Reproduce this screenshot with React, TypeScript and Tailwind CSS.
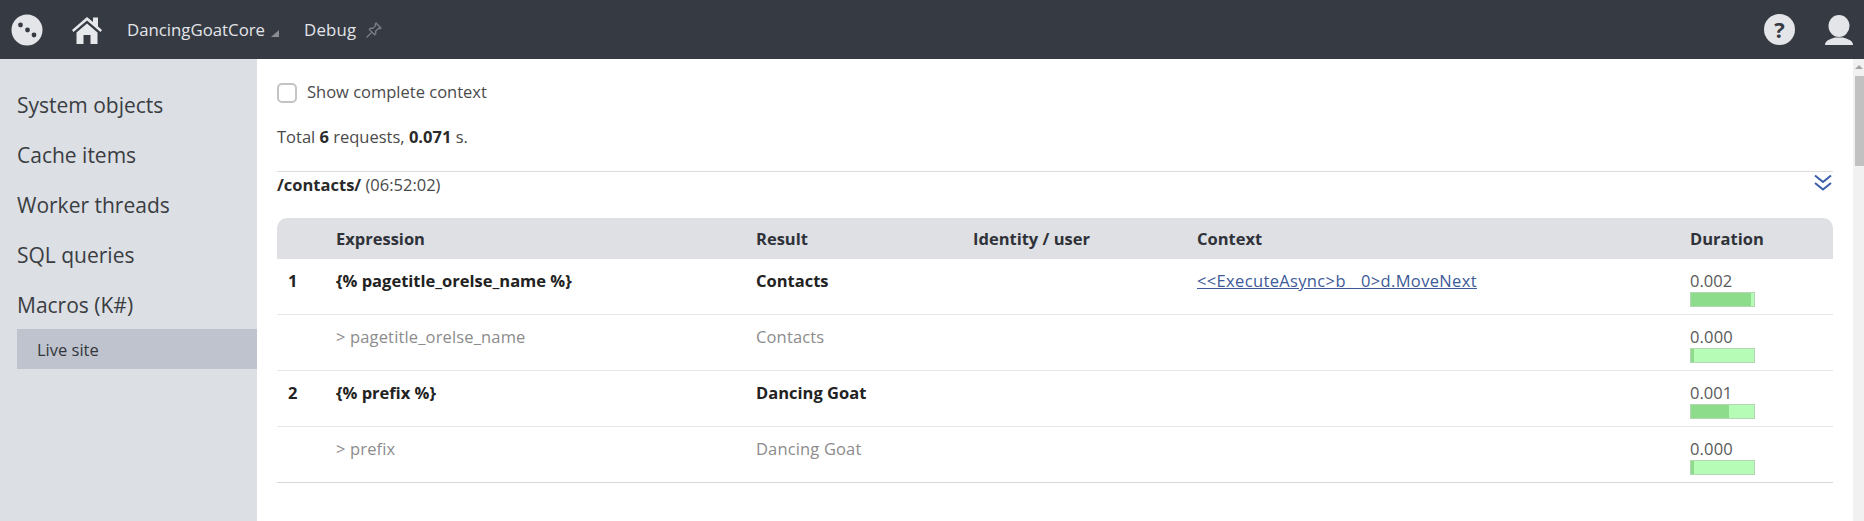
import React from 'react';

const GRID = 'grid grid-cols-[59px_420px_217px_224px_493px_143px]';

const rows = [
  { no: '1', expression: '{% pagetitle_orelse_name %}', result: 'Contacts', context: '<<ExecuteAsync>b__0>d.MoveNext', duration: '0.002', fill: 'w-[95%]', main: true },
  { no: '', expression: '> pagetitle_orelse_name', result: 'Contacts', context: '', duration: '0.000', fill: 'w-[5%]', main: false },
  { no: '2', expression: '{% prefix %}', result: 'Dancing Goat', context: '', duration: '0.001', fill: 'w-[60%]', main: true },
  { no: '', expression: '> prefix', result: 'Dancing Goat', context: '', duration: '0.000', fill: 'w-[5%]', main: false },
];

const menu = ['System objects', 'Cache items', 'Worker threads', 'SQL queries', 'Macros (K#)'];

const Logo = () => (
  <svg width="32" height="32" viewBox="0 0 32 32">
    <circle cx="16" cy="16" r="15.5" fill="#e3e5e9" />
    <circle cx="9.5" cy="11" r="2.4" fill="#363a43" />
    <circle cx="16.5" cy="16" r="2.4" fill="#363a43" />
    <circle cx="23" cy="21" r="2.4" fill="#363a43" />
  </svg>
);

const Home = () => (
  <svg width="32" height="30" viewBox="0 0 32 30">
    <path d="M1 15 L16 2 L22 7 V2.5 H27 V11.5 L31 15 L29.5 17 L16 5.5 L2.5 17 Z" fill="#e6e8ec" />
    <path d="M5.5 17.5 L16 8.5 L26.5 17.5 V29 H19.5 V20 H12.5 V29 H5.5 Z" fill="#e6e8ec" />
  </svg>
);

const Pin = () => (
  <svg width="16" height="16" viewBox="0 0 16 16">
    <path d="M10 1 L15 6 L13.8 6.8 L12.6 6.2 L9.6 9.2 L9.8 11.6 L8.6 12.8 L3.2 7.4 L4.4 6.2 L6.8 6.4 L9.8 3.4 L9.2 2.2 Z M5.4 10.6 L1 15 L1 15 L5.4 10.6" fill="none" stroke="#7d8087" strokeWidth="1.3" strokeLinejoin="round" />
  </svg>
);

const User = () => (
  <svg width="30" height="30" viewBox="0 0 30 30">
    <ellipse cx="15" cy="11" rx="10.5" ry="11" fill="#e3e5e9" />
    <path d="M1 30 C1 25 7 24 11 22.5 H19 C23 24 29 25 29 30 Z" fill="#e3e5e9" />
  </svg>
);

const Chevrons = () => (
  <svg width="18" height="18" viewBox="0 0 18 18" fill="none" stroke="#3b5ea8" strokeWidth="2">
    <path d="M1 1.5 L9 8 L17 1.5" />
    <path d="M1 9 L9 15.5 L17 9" />
  </svg>
);

const App = () => {
  return (
    <div className="h-[521px] w-full overflow-hidden flex flex-col bg-white font-['Open_Sans','Noto_Sans',sans-serif] text-[#3c3c3c]">
      <header className="h-[59px] shrink-0 bg-[#363a43] flex items-center pl-[11px] pr-[10px] text-[#e3e5e9]">
        <Logo />
        <div className="ml-[28px]"><Home /></div>
        <span className="ml-[24px] text-[16.8px]">DancingGoatCore</span>
        <span className="ml-[6px] mt-[7px] w-0 h-0 border-l-[8px] border-l-transparent border-b-[7px] border-b-[#8c8d92]"></span>
        <span className="ml-[25px] text-[16.8px] tracking-[0.2px]">Debug</span>
        <span className="ml-[10px]"><Pin /></span>
        <span className="ml-auto w-[31px] h-[31px] rounded-full bg-[#e3e5e9] text-[#363a43] flex items-center justify-center text-[22px] font-bold">?</span>
        <span className="ml-[29px]"><User /></span>
      </header>

      <div className="flex-1 flex min-h-0">
        <aside className="w-[257px] shrink-0 bg-[#dcdfe4] pt-[20px] pl-[17px]">
          {menu.map((item) => (
            <div key={item} className="h-[50px] pt-[3px] flex items-center text-[21px] text-[#3a3d42]">
              {item}
            </div>
          ))}
          <div className="h-[40px] pt-[2px] flex items-center pl-[20px] bg-[#bfc3cd] text-[16.5px] text-[#33363b]">
            Live site
          </div>
        </aside>

        <main className="flex-1 min-w-0 pl-[20px] pr-[20px]">
          <label className="h-[66px] flex items-center pt-[1px] text-[16.5px] text-[#4a4a4a]">
            <span className="w-[20px] h-[20px] rounded-[5px] border-2 border-[#c4c4c4] bg-white"></span>
            <span className="ml-[10px]">Show complete context</span>
          </label>
          <div className="h-[24px] flex items-center text-[16.5px] text-[#4a4a4a]">
            <span>Total <b className="text-[#2a2a2a]">6</b> requests, <b className="text-[#2a2a2a]">0.071</b> s.</span>
          </div>
          <div className="mt-[22px] h-[47px] border-t border-[#dcdcdc] flex justify-between pr-[1px]">
            <div className="pt-[1px] text-[16.5px] leading-[24px]">
              <b className="text-[#2a2a2a]">/contacts/</b> <span className="text-[#4a4a4a]">(06:52:02)</span>
            </div>
            <div className="pt-[2px]"><Chevrons /></div>
          </div>

          <div className={`${GRID} h-[41px] pt-[2px] items-center bg-[#dee0e4] rounded-t-[10px] text-[16.5px] font-bold text-[#2f3238]`}>
            <span></span>
            <span>Expression</span>
            <span>Result</span>
            <span>Identity / user</span>
            <span>Context</span>
            <span>Duration</span>
          </div>

          {rows.map((row, i) => (
            <div
              key={i}
              className={`${GRID} h-[56px] border-b text-[16.5px] ${i === rows.length - 1 ? 'border-[#d6d6d6]' : 'border-[#e6e6e6]'} ${row.main ? 'font-bold text-[#222222]' : 'tracking-[0.15px] text-[#8c8c8c]'}`}
            >
              <span className="pl-[11px] pt-[10px] leading-[24px]">{row.no}</span>
              <span className="pt-[10px] leading-[24px]">{row.expression}</span>
              <span className="pt-[10px] leading-[24px]">{row.result}</span>
              <span></span>
              <span className="pt-[10px] leading-[24px]">
                {row.context && <a className="font-normal tracking-[0.35px] text-[#3d5a98] underline">{row.context}</a>}
              </span>
              <div className="pt-[11px]">
                <div className="font-normal leading-[22px] text-[#5a5a5a]">{row.duration}</div>
                <div className="w-[65px] h-[15px] bg-[#b6fcb6] border border-[#b5d6b5]">
                  <div className={`h-full bg-[#8cdc8c] ${row.fill}`}></div>
                </div>
              </div>
            </div>
          ))}
        </main>

        <div className="w-[11px] shrink-0 bg-[#f1f1f1] flex flex-col items-center">
          <span className="mt-[6px] w-0 h-0 border-l-[4px] border-r-[4px] border-b-[4px] border-l-transparent border-r-transparent border-b-[#a3a3a3]"></span>
          <div className="mt-[7px] ml-[2px] w-[9px] h-[90px] bg-[#c1c1c1]"></div>
        </div>
      </div>
    </div>
  );
};

export default App;
